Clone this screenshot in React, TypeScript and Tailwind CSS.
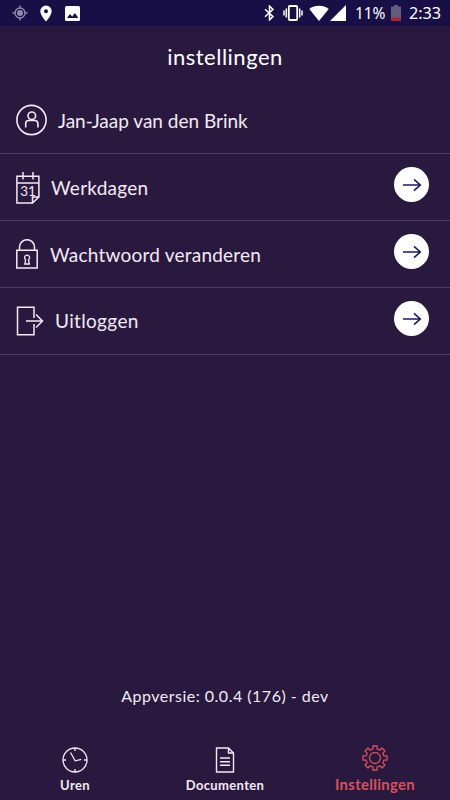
import React, { ReactElement, ReactNode } from 'react';
import c from 'clsx';

export default function App(): ReactElement {
  return (
    <div className="flex flex-col w-[450px] h-[800px] overflow-hidden bg-[#29193f] text-[#f3eaf4] font-['Lato','Open_Sans',sans-serif]">
      <StatusBar />
      <h1 className="h-[61px] pt-[16px] text-center text-[22px] leading-[30px] tracking-[0.5px] text-white">
        instellingen
      </h1>
      <main className="flex flex-col">
        <Row icon={<UserIcon />} gap="gap-[11px]">
          <span className="pt-[2px]">Jan-Jaap van den Brink</span>
        </Row>
        <Row icon={<CalendarIcon />} gap="gap-[11px]" link>
          <span className="pt-[2px] tracking-[0.25px]">Werkdagen</span>
        </Row>
        <Row icon={<LockIcon />} gap="gap-[12px]" link>
          <span className="pt-[2px] tracking-[0.22px]">Wachtwoord veranderen</span>
        </Row>
        <Row icon={<LogoutIcon />} gap="gap-[11px]" link>
          <span className="pt-[1px] tracking-[0.35px]">Uitloggen</span>
        </Row>
      </main>
      <p className="mt-auto mb-[27px] text-center text-[16px] leading-[22px] tracking-[0.5px]">
        Appversie: 0.0.4 (176) - dev
      </p>
      <nav className="grid grid-cols-3 h-[66px]">
        <Tab icon={<ClockIcon />} label="Uren" />
        <Tab icon={<DocumentIcon />} label="Documenten" />
        <Tab icon={<GearIcon />} label="Instellingen" active />
      </nav>
    </div>
  );
}

function StatusBar(): ReactElement {
  return (
    <header className="flex flex-row items-center h-[26px] shrink-0 bg-[#180f47] text-white font-['Noto_Sans',sans-serif]">
      <svg className="ml-[12px]" width="16" height="16" viewBox="0 0 16 16" fill="none" stroke="#8f88ad">
        <circle cx="8" cy="8" r="5" strokeWidth="1.4" />
        <circle cx="8" cy="8" r="3" fill="#8f88ad" stroke="none" />
        <path d="M8 .5v3M8 12.5v3M.5 8h3M12.5 8h3" strokeWidth="1.4" />
      </svg>
      <svg className="ml-[12px]" width="12" height="17" viewBox="0 0 12 17" fill="white">
        <path
          fillRule="evenodd"
          d="M6 .5A5.7 5.7 0 0 0 .3 6.2C.3 10.3 6 16.5 6 16.5s5.7-6.2 5.7-10.3A5.7 5.7 0 0 0 6 .5zm0 3.7a2 2 0 1 1 0 4 2 2 0 0 1 0-4z"
        />
      </svg>
      <svg className="ml-[13px]" width="15" height="15" viewBox="0 0 15 15">
        <rect width="15" height="15" rx="1.5" fill="white" />
        <path d="M2 12l3-4 2.2 2.6L10 7l3.3 5z" fill="#180f47" />
      </svg>
      <div className="flex flex-row items-center ml-auto mr-[9px]">
        <svg width="11" height="16" viewBox="0 0 11 16" fill="none" stroke="white" strokeWidth="1.5">
          <path d="M1 4.2l8 7.4L5.5 15V1L9 4.4l-8 7.4" />
        </svg>
        <svg className="ml-[8px]" width="20" height="16" viewBox="0 0 20 16" fill="none" stroke="white">
          <rect x="5.8" y="1" width="8.4" height="14" rx="1" strokeWidth="1.8" />
          <path d="M3.3 3.5v9M16.7 3.5v9M1 5.5v5M19 5.5v5" strokeWidth="1.5" />
        </svg>
        <svg className="ml-[6px]" width="20" height="16" viewBox="0 0 20 16" fill="white">
          <path d="M10 16L.3 4C5.5-.3 14.5-.3 19.7 4z" />
        </svg>
        <svg className="ml-[1px]" width="16" height="16" viewBox="0 0 16 16" fill="white">
          <path d="M16 0v16H0z" />
        </svg>
        <span className="ml-[9px] w-[31px] text-[15.5px] leading-[24px] whitespace-nowrap">11%</span>
        <svg className="ml-[5px]" width="10" height="16" viewBox="0 0 10 16">
          <path d="M3 0h4v1.5h3V16H0V1.5h3z" fill="#635d80" />
          <path d="M0 12.5h10V16H0z" fill="#b02438" />
        </svg>
        <span className="ml-[8px] text-[16.2px] leading-[24px]">2:33</span>
      </div>
    </header>
  );
}

function Row(props: {
  icon: ReactNode;
  gap: string;
  children: ReactNode;
  link?: boolean;
}): ReactElement {
  return (
    <div className="flex flex-row items-center h-[67px] pl-4 pr-[21px] border-b border-[#4d3d61]">
      <div className={c('flex flex-row items-center flex-grow text-[19px]', props.gap)}>
        {props.icon}
        {props.children}
      </div>
      {props.link && (
        <button className="flex items-center justify-center size-[35px] mb-[5px] rounded-full bg-white">
          <svg width="20" height="14" viewBox="0 0 20 14" fill="none" stroke="#21166b" strokeWidth="1.6">
            <path d="M1 7h17.5M12 1.3L18.3 7 12 12.7" />
          </svg>
        </button>
      )}
    </div>
  );
}

function Tab(props: {
  icon: ReactNode;
  label: string;
  active?: boolean;
}): ReactElement {
  return (
    <button
      className={c('flex flex-col items-center', {
        'pt-[11px] gap-[4px] text-[14.8px] text-[#d8515c]': props.active,
        'pt-[13px] gap-[3px] text-[13px]': !props.active,
      })}
    >
      {props.icon}
      <span className="leading-[18px] font-bold tracking-[0.35px]">{props.label}</span>
    </button>
  );
}

function UserIcon(): ReactElement {
  return (
    <svg width="31" height="32" viewBox="0 0 31 32" fill="none" stroke="currentColor" strokeWidth="1.6">
      <circle cx="15.5" cy="16" r="14.6" />
      <circle cx="15.8" cy="11.8" r="3.8" />
      <path d="M9.7 23.5v-4a3 3 0 0 1 3-3h6.2a3 3 0 0 1 3 3v4" />
    </svg>
  );
}

function CalendarIcon(): ReactElement {
  return (
    <svg width="24" height="33" viewBox="0 0 24 33" fill="none" stroke="currentColor" strokeWidth="1.5">
      <path d="M16.5 32H.9V5.3h22V26l-6.4 6v-6h6.4M.9 12h22M7 1v7.5M17 1v7.5" />
      <text
        x="12"
        y="25.2"
        textAnchor="middle"
        className="text-[13.5px] font-['Lato',sans-serif]"
        fill="currentColor"
        stroke="none"
      >
        31
      </text>
    </svg>
  );
}

function LockIcon(): ReactElement {
  return (
    <svg width="22" height="30" viewBox="0 0 22 30" fill="none" stroke="currentColor" strokeWidth="1.5">
      <path d="M.8 11.2h20.4V29H.8zM3.5 11.2V8.2a7.5 7.5 0 0 1 15 0v3" />
      <path d="M9.5 20.500a2.500 2.500 0 1 1 3.200 0v1.500l.7 3H8.800l.7-3z" strokeWidth="1.3" />
    </svg>
  );
}

function LogoutIcon(): ReactElement {
  return (
    <svg width="28" height="30" viewBox="0 0 28 30" fill="none" stroke="currentColor" strokeWidth="1.5">
      <path d="M18 12V1.2H1.5v27.6H18V18M10 15h16.3M20 8.5l6.5 6.5-6.5 6.5" />
    </svg>
  );
}

function ClockIcon(): ReactElement {
  return (
    <svg width="26" height="26" viewBox="0 0 26 26" fill="none" stroke="currentColor" strokeWidth="1.3">
      <circle cx="13" cy="13" r="12" />
      <path d="M13 1v3M13 22v3M1 13h3M22 13h3M8.5 5.5l4.7 8.3 6-1.5" />
    </svg>
  );
}

function DocumentIcon(): ReactElement {
  return (
    <svg width="20" height="26" viewBox="0 0 20 26" fill="none" stroke="currentColor" strokeWidth="1.4">
      <path d="M13.5 1h-12v24h17V6zM13.5 1v5h5M5 11h10M5 14.7h10M5 18.3h10" />
    </svg>
  );
}

// each tooth is four points: base, tip, tip, base
function gearPath(): string {
  const points: string[] = [];
  for (let i = 0; i < 8; i++) {
    for (const [angle, r] of [[-13, 9.2], [-10, 12.2], [10, 12.2], [13, 9.2]]) {
      const a = ((i * 45 + angle) * Math.PI) / 180;
      points.push(`${(13 + r * Math.cos(a)).toFixed(2)} ${(13 + r * Math.sin(a)).toFixed(2)}`);
    }
  }
  return `M${points.join('L')}z`;
}

function GearIcon(): ReactElement {
  return (
    <svg width="26" height="26" viewBox="0 0 26 26" fill="none" stroke="currentColor" strokeWidth="1.3">
      <path d={gearPath()} strokeLinejoin="round" />
      <circle cx="13" cy="13" r="5.5" />
    </svg>
  );
}
